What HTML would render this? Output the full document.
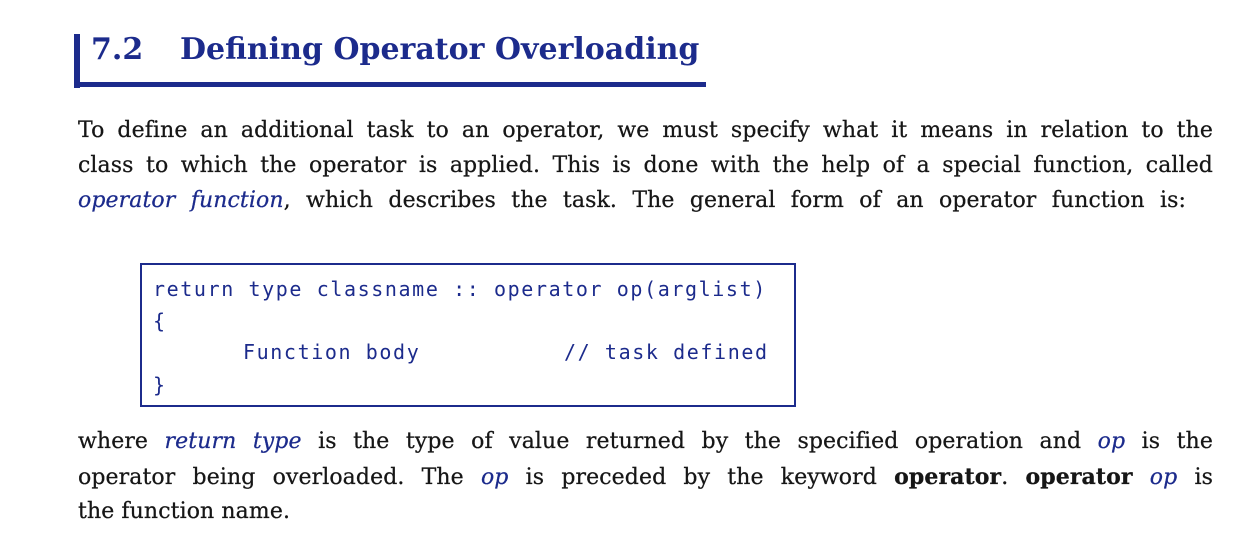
<!DOCTYPE html>
<html><head><meta charset="utf-8"><style>
body{margin:0;width:1252px;height:547px;background:#fff;position:relative;overflow:hidden;font-family:"DejaVu Serif","Liberation Serif",serif;}
.bar{position:absolute;left:74px;top:34px;width:6px;height:54px;background:#1c2b8c;}
.ul{position:absolute;left:74px;top:82px;width:632px;height:5px;background:#1c2b8c;}
.h{position:absolute;top:30px;font-size:30px;font-weight:bold;color:#1c2b8c;line-height:40px;white-space:nowrap;letter-spacing:0px;}
.l{position:absolute;left:78px;width:1135px;font-size:22px;color:#161616;line-height:30px;text-align:justify;text-align-last:justify;white-space:nowrap;letter-spacing:0.1px;-webkit-text-stroke:0.25px #161616;}
.l.n{text-align-last:left;}
i{color:#1c2b8c;-webkit-text-stroke:0.25px #1c2b8c;}
.box{position:absolute;left:140px;top:263px;width:652px;height:140px;border:2px solid #1c2b8c;}
.c{position:absolute;font-family:"DejaVu Sans Mono","Liberation Mono",monospace;font-size:20px;color:#1c2b8c;white-space:pre;line-height:24px;letter-spacing:1.6px;}
</style></head><body>
<div class="bar"></div><div class="ul"></div>
<div class="h" style="left:91px">7.2</div>
<div class="h" style="left:180px">Defining Operator Overloading</div>
<div class="l" style="top:116px">To define an additional task to an operator, we must specify what it means in relation to the</div>
<div class="l" style="top:151px">class to which the operator is applied. This is done with the help of a special function, called</div>
<div class="l" style="top:186px;width:1108px"><i>operator function</i>, which describes the task. The general form of an operator function is:</div>
<div class="box"></div>
<div class="c" style="left:153px;top:277px">return type classname :: operator op(arglist)</div>
<div class="c" style="left:153px;top:309px">{</div>
<div class="c" style="left:243px;top:340px">Function body</div>
<div class="c" style="left:564px;top:340px">// task defined</div>
<div class="c" style="left:153px;top:373px">}</div>
<div class="l" style="top:427px">where <i>return type</i> is the type of value returned by the specified operation and <i>op</i> is the</div>
<div class="l" style="top:462px">operator being overloaded. The <i>op</i> is preceded by the keyword <b>operator</b>. <b>operator</b> <i>op</i> is</div>
<div class="l n" style="top:497px">the function name.</div>
</body></html>
